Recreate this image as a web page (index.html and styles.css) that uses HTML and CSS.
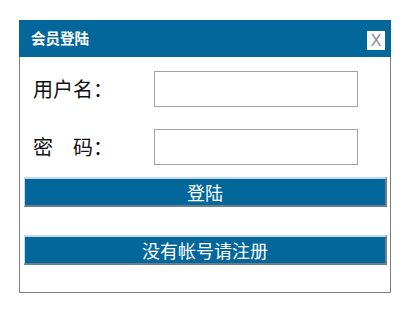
FILE: index.html
```html
<!DOCTYPE html>
<html lang="zh-CN">
<head>
<meta charset="utf-8">
<title>会员登陆</title>
<link rel="stylesheet" href="styles.css">
</head>
<body>
<div class="dialog">
  <div class="dialog-head">
    <span class="dialog-title">会员登陆</span>
    <span class="dialog-close">X</span>
  </div>
  <div class="dialog-body">
    <div class="field">
      <label class="field-label">用户名：</label>
      <input class="field-input" type="text">
    </div>
    <div class="field">
      <label class="field-label">密　码：</label>
      <input class="field-input" type="password">
    </div>
    <button class="btn btn-login" type="button">登陆</button>
    <button class="btn btn-register" type="button">没有帐号请注册</button>
  </div>
</div>
</body>
</html>
```
FILE: styles.css
```css
html, body {
  margin: 0;
  padding: 0;
  background: #ffffff;
}
body {
  font-family: "Noto Sans CJK SC", "Liberation Sans", sans-serif;
}
.dialog {
  box-sizing: border-box;
  width: 372px;
  height: 273px;
  margin: 20px 0 0 19px;
  border: 1px solid #7f7f7f;
  border-top: none;
  display: flex;
  flex-direction: column;
}
.dialog-head {
  height: 37px;
  margin: 0 -1px;
  background: #03679b;
  display: flex;
  align-items: center;
  justify-content: space-between;
  padding: 0 6px 0 12px;
}
.dialog-title {
  color: #ffffff;
  font-weight: bold;
  font-size: 14.5px;
  line-height: 1;
}
.dialog-close {
  width: 18px;
  height: 19px;
  background: #ffffff;
  color: #8a8a8a;
  font-family: "Liberation Sans", sans-serif;
  font-size: 16px;
  line-height: 19px;
  text-align: center;
  margin-top: 3px;
}
.dialog-body {
  padding: 14px 0 0 0;
  display: flex;
  flex-direction: column;
}
.field {
  display: flex;
  align-items: center;
  height: 36px;
  margin-bottom: 22px;
}
.field + .field {
  margin-bottom: 12px;
}
.field-label {
  box-sizing: border-box;
  width: 134px;
  padding-left: 13px;
  font-size: 20px;
  color: #111111;
  line-height: 1;
}
.field-input {
  box-sizing: border-box;
  width: 204px;
  height: 36px;
  margin: 0;
  border: 1px solid #a3a3a3;
  background: #ffffff;
  padding: 0 4px;
}
.btn {
  box-sizing: border-box;
  width: 363px;
  height: 30px;
  margin: 0 0 0 4px;
  padding: 0;
  background: #03679b;
  color: #ffffff;
  font-family: "Noto Sans CJK SC", "Liberation Sans", sans-serif;
  font-size: 18px;
  line-height: 26px;
  border-style: solid;
  border-width: 2px 2px 2px 1px;
  border-color: #c3d9e6 #6e7f8c #6e7f8c #c3d9e6;
}
.btn-register {
  margin-top: 28px;
}
```
